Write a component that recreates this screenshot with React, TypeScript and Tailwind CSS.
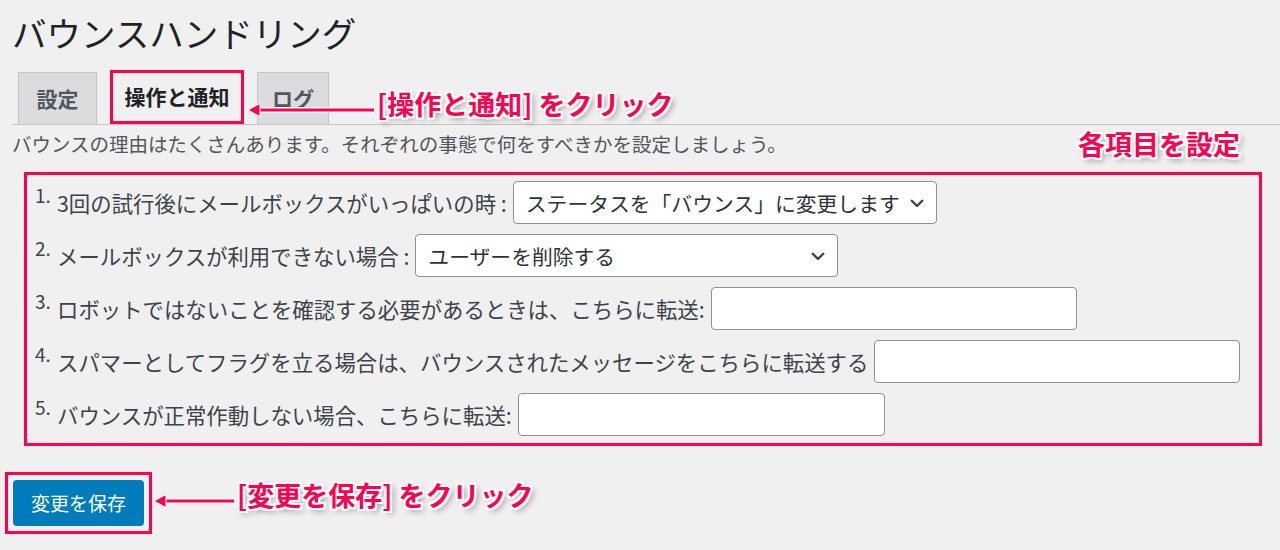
import { ReactNode } from "react";

type Row = {
  n: string;
  label: string;
  kind: "select" | "input";
  value?: string;
  width: string;
};

const ROWS: Row[] = [
  { n: "1.", label: "3回の試行後にメールボックスがいっぱいの時 :", kind: "select", value: "ステータスを「バウンス」に変更します", width: "w-[424px]" },
  { n: "2.", label: "メールボックスが利用できない場合 :", kind: "select", value: "ユーザーを削除する", width: "w-[423px]" },
  { n: "3.", label: "ロボットではないことを確認する必要があるときは、こちらに転送:", kind: "input", width: "w-[366px]" },
  { n: "4.", label: "スパマーとしてフラグを立る場合は、バウンスされたメッセージをこちらに転送する", kind: "input", width: "w-[366px]" },
  { n: "5.", label: "バウンスが正常作動しない場合、こちらに転送:", kind: "input", width: "w-[367px]" },
];

// white outline + soft drop shadow used on the red call-outs
const callout =
  "font-bold text-[#ff0050] text-[27px] leading-[36px] whitespace-nowrap [text-shadow:2px_0_0_#fff,-2px_0_0_#fff,0_2px_0_#fff,0_-2px_0_#fff,2px_2px_0_#fff,-2px_-2px_0_#fff,2px_-2px_0_#fff,-2px_2px_0_#fff,3px_3px_6px_rgba(0,0,0,0.45)]";

function Arrow({ width }: { width: number }) {
  return (
    <svg width={width} height={16} viewBox={`0 0 ${width} 16`} className="block mt-[12px]">
      <line x1={10} y1={8} x2={width} y2={8} stroke="#fff" strokeWidth={6} />
      <line x1={10} y1={8} x2={width - 1} y2={8} stroke="#ff0050" strokeWidth={3} />
      <polygon points="1,8 13,1.5 13,14.5" fill="#ff0050" stroke="#fff" strokeWidth={1} />
    </svg>
  );
}

function Chevron() {
  return (
    <svg width="18" height="18" viewBox="0 0 24 24" fill="none" stroke="#3c434a" strokeWidth={3.2} strokeLinecap="round" strokeLinejoin="round">
      <path d="M5 9l7 7 7-7" />
    </svg>
  );
}

function Tab({ children, active, width }: { children: ReactNode; active?: boolean; width?: string }) {
  if (active) {
    return (
      <div className="h-[54px] w-[134px] border-[3px] border-[#ff0050] bg-[#f0f0f1] flex items-center justify-center text-[21px] font-bold text-[#1d2327]">
        {children}
      </div>
    );
  }
  return (
    <div className={`${width} h-[52px] border border-b-0 border-[#c3c4c7] bg-[#dcdcde] flex items-center justify-center text-[21px] font-bold text-[#50575e]`}>
      {children}
    </div>
  );
}

export default function App() {
  return (
    <div className="min-h-[550px] bg-[#f0f0f1] pt-[10px] font-['Noto_Sans_CJK_JP',sans-serif] text-[#3c434a]">
      <h1 className="ml-[12px] h-[44px] text-[34.5px] leading-[44px] text-[#1d2327] font-normal">
        バウンスハンドリング
      </h1>

      {/* tabs */}
      <div className="relative mt-[16px] ml-[12px] flex items-end gap-[13px] border-b border-[#c3c4c7] pl-[6px]">
        <Tab width="w-[79px]">設定</Tab>
        <Tab active>操作と通知</Tab>
        <Tab width="w-[72px]">ログ</Tab>
        <div className="absolute left-[235px] top-[16px] flex items-center gap-[2px]">
          <Arrow width={128} />
          <span className={callout}>[操作と通知] をクリック</span>
        </div>
      </div>

      <div className="mt-[1px] ml-[12px] mr-[40px] flex items-center justify-between">
        <p className="text-[19.5px] leading-[28px] text-[#50575e]">
          バウンスの理由はたくさんあります。それぞれの事態で何をすべきかを設定しましょう。
        </p>
        <span className={callout}>各項目を設定</span>
      </div>

      {/* options */}
      <div className="mt-[10px] ml-[24px] mr-[18px] border-[3px] border-[#ff0050] pl-[8px] pt-[6px] pb-[7px] flex flex-col gap-[10px]">
        {ROWS.map((r) => (
          <div key={r.n} className="flex items-center h-[43px]">
            <span className="w-[22px] self-start mt-[1px] text-[19px] leading-[26px]">{r.n}</span>
            <span className="text-[21.4px] leading-[30px] whitespace-nowrap mr-[6px]">{r.label}</span>
            {r.kind === "select" ? (
              <div className={`${r.width} h-[43px] bg-white border border-[#8c8f94] rounded-[4px] flex items-center justify-between pl-[12px] pr-[10px]`}>
                <span className="text-[20.8px] leading-[28px] text-[#2c3338] whitespace-nowrap">{r.value}</span>
                <Chevron />
              </div>
            ) : (
              <div className={`${r.width} h-[43px] bg-white border border-[#8c8f94] rounded-[4px]`} />
            )}
          </div>
        ))}
      </div>

      {/* save */}
      <div className="mt-[26px] ml-[5px] flex items-center">
        <div className="border-[3px] border-[#ff0050] p-[5px]">
          <button className="h-[46px] w-[131px] rounded-[4px] bg-[#007cba] text-white text-[19px] leading-[26px]">
            変更を保存
          </button>
        </div>
        <div className="ml-[1px] mb-[16px] flex items-center gap-[2px]">
          <Arrow width={82} />
          <span className={callout}>[変更を保存] をクリック</span>
        </div>
      </div>
    </div>
  );
}
